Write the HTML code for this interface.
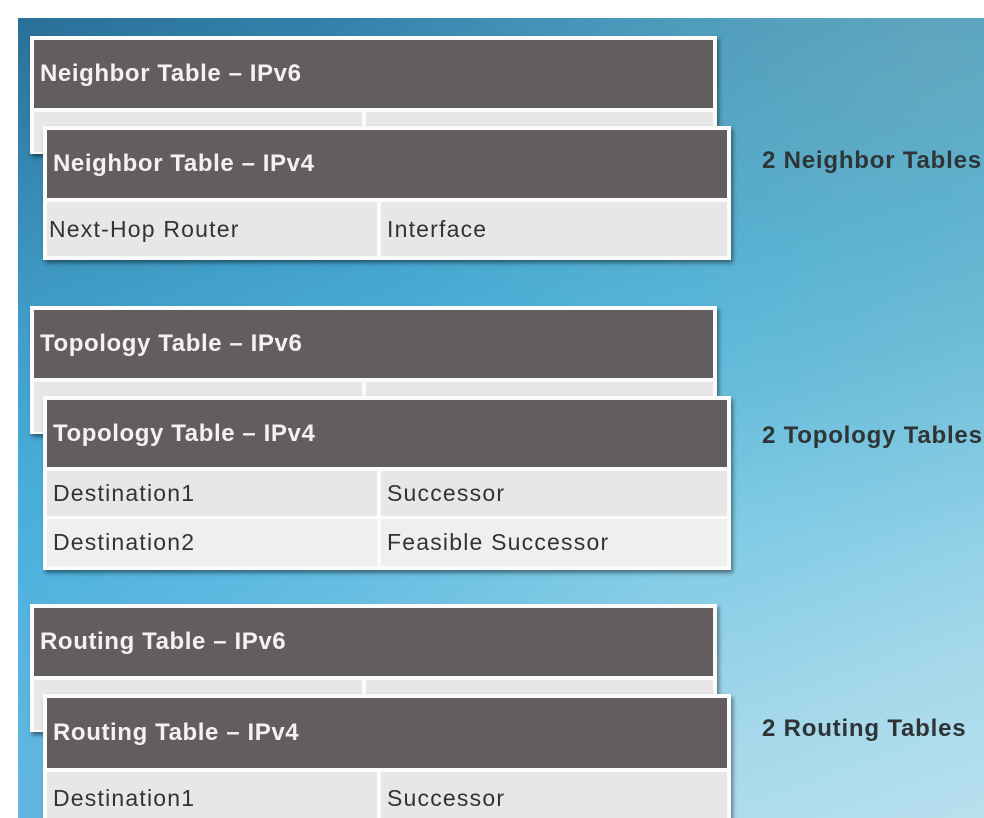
<!DOCTYPE html>
<html><head><style>
*{margin:0;padding:0;box-sizing:border-box}
html,body{width:984px;height:818px;overflow:hidden}
body{background:#fff;font-family:"Liberation Sans",Arial,sans-serif;position:relative}
.bg{position:absolute;left:18px;top:18px;width:966px;height:800px;
background:linear-gradient(160deg,#2a6f98 0%,#3b93bd 20%,#4eb6de 45%,#7cc9e4 65%,#a4d8ea 85%,#b8e0ee 100%)}
.bg2{position:absolute;left:18px;top:18px;width:966px;height:800px;
background:radial-gradient(ellipse at 95% 5%,rgba(120,170,180,.55),rgba(120,170,180,0) 45%),radial-gradient(ellipse at 0% 100%,rgba(60,160,220,.5),rgba(60,160,220,0) 50%)}
.box{position:absolute;background:#fbfbfb;box-shadow:2px 3px 4px rgba(0,0,0,.45);padding:4px;overflow:hidden}
.hd{background:#625d5e;color:#f4f2f0;font-weight:bold;font-size:24px;letter-spacing:0.6px;display:flex;align-items:center;padding-left:6px;white-space:nowrap}
.row{display:flex;margin-top:4px}
.c{background:#e8e6e7;font-size:23px;letter-spacing:1.2px;color:#333;display:flex;align-items:center;padding-left:6px;white-space:nowrap}
.c2{background:#f0efef}
.lbl{position:absolute;left:762px;font-weight:bold;font-size:24px;color:#2f3436;letter-spacing:0.8px;white-space:nowrap}
</style></head><body>
<div class="bg"></div><div class="bg2"></div>

<div class="box" style="left:30px;top:36px;width:687px;height:118px">
 <div class="hd" style="height:68px">Neighbor Table – IPv6</div>
 <div class="row"><div class="c" style="width:328px;height:40px"></div><div class="c" style="width:347px;height:40px;margin-left:4px"></div></div>
</div>
<div class="box" style="left:43px;top:126px;width:688px;height:134px">
 <div class="hd" style="height:68px">Neighbor Table – IPv4</div>
 <div class="row"><div class="c" style="width:330px;height:54px;padding-left:2px">Next-Hop Router</div><div class="c" style="width:346px;height:54px;margin-left:4px">Interface</div></div>
</div>
<div class="lbl" style="top:147px">2 Neighbor Tables</div>

<div class="box" style="left:30px;top:306px;width:687px;height:128px">
 <div class="hd" style="height:68px">Topology Table – IPv6</div>
 <div class="row"><div class="c" style="width:328px;height:50px"></div><div class="c" style="width:347px;height:50px;margin-left:4px"></div></div>
</div>
<div class="box" style="left:43px;top:396px;width:688px;height:174px">
 <div class="hd" style="height:67px">Topology Table – IPv4</div>
 <div class="row"><div class="c" style="width:330px;height:45px">Destination1</div><div class="c" style="width:346px;height:45px;margin-left:4px">Successor</div></div>
 <div class="row" style="margin-top:3px"><div class="c c2" style="width:330px;height:47px">Destination2</div><div class="c c2" style="width:346px;height:47px;margin-left:4px">Feasible Successor</div></div>
</div>
<div class="lbl" style="top:422px">2 Topology Tables</div>

<div class="box" style="left:30px;top:604px;width:687px;height:128px">
 <div class="hd" style="height:68px">Routing Table – IPv6</div>
 <div class="row"><div class="c" style="width:328px;height:50px"></div><div class="c" style="width:347px;height:50px;margin-left:4px"></div></div>
</div>
<div class="box" style="left:43px;top:694px;width:688px;height:140px">
 <div class="hd" style="height:70px">Routing Table – IPv4</div>
 <div class="row"><div class="c" style="width:330px;height:52px">Destination1</div><div class="c" style="width:346px;height:52px;margin-left:4px">Successor</div></div>
</div>
<div class="lbl" style="top:715px">2 Routing Tables</div>
</body></html>
